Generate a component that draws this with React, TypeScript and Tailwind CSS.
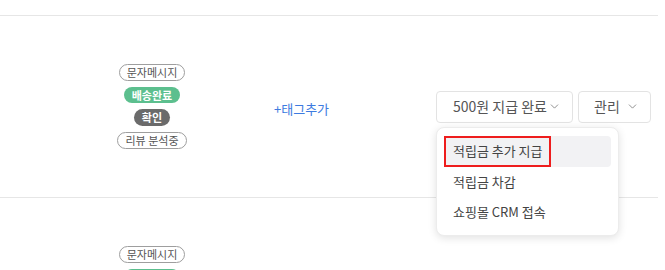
import { ChevronDown } from "lucide-react";

const font = { fontFamily: '"Noto Sans CJK KR", "Noto Sans", sans-serif' };

function Badges() {
  const outline =
    "px-[7px] h-[17px] flex items-center rounded-full border border-[#9e9e9e] text-[11px] text-[#555] leading-none";
  return (
    <div className="flex flex-col items-center gap-[6px]">
      <span className={outline}>문자메시지</span>
      <span className="px-[8px] h-[16px] flex items-center rounded-full bg-[#5cbf8e] text-[11px] font-bold text-white leading-none">
        배송완료
      </span>
      <span className="px-[8px] h-[17px] flex items-center rounded-full bg-[#6b6b6b] text-[11px] font-bold text-white leading-none">
        확인
      </span>
      <span className={outline}>리뷰 분석중</span>
    </div>
  );
}

function Row({ open }: { open?: boolean }) {
  return (
    <div className="h-[182px] border-b border-[#e6e6e6] flex items-center pl-[72px]">
      <div className="w-[160px] flex justify-center">
        <Badges />
      </div>
      <div className="w-[204px] pl-[42px]">
        <button className="text-[13px] text-[#3d7be0]">+태그추가</button>
      </div>
      <div className="flex gap-[5px]">
        <div className="relative">
          <div className="w-[137px] h-[32px] flex items-center justify-between pl-[16px] pr-[11px] border border-[#e3e3e3] rounded-[4px] bg-white text-[14px] text-[#555]">
            <span>500원 지급 완료</span>
            <ChevronDown size={13} strokeWidth={1.5} className="text-[#777]" />
          </div>
          {open ? (
            <div className="absolute left-0 top-[36px] w-[183px] z-10 bg-white rounded-[8px] border border-[#ececec] shadow-[0_2px_8px_rgba(0,0,0,0.12)] py-[8px] px-[7px] flex flex-col">
              <div className="relative h-[31px] flex items-center pl-[9px] rounded-[4px] bg-[#f2f2f4] text-[13px] text-[#444]">
                적립금 추가 지급
                <div className="absolute left-0 top-0 w-[107px] h-[31px] border-2 border-[#ee1d1d]" />
              </div>
              <div className="h-[30px] flex items-center pl-[9px] text-[13px] text-[#444]">
                적립금 차감
              </div>
              <div className="h-[30px] flex items-center pl-[9px] text-[13px] text-[#444]">
                쇼핑몰 CRM 접속
              </div>
            </div>
          ) : null}
        </div>
        <div className="w-[73px] h-[32px] flex items-center justify-between pl-[15px] pr-[11px] border border-[#e3e3e3] rounded-[4px] bg-white text-[14px] text-[#555]">
          <span>관리</span>
          <ChevronDown size={13} strokeWidth={1.5} className="text-[#777]" />
        </div>
      </div>
    </div>
  );
}

export default function App() {
  return (
    <div className="w-[665px] h-[270px] overflow-hidden bg-white" style={font}>
      <div className="w-[658px]">
        <div className="h-[16px] border-b border-[#e6e6e6]" />
        <Row open />
        <Row />
      </div>
    </div>
  );
}
